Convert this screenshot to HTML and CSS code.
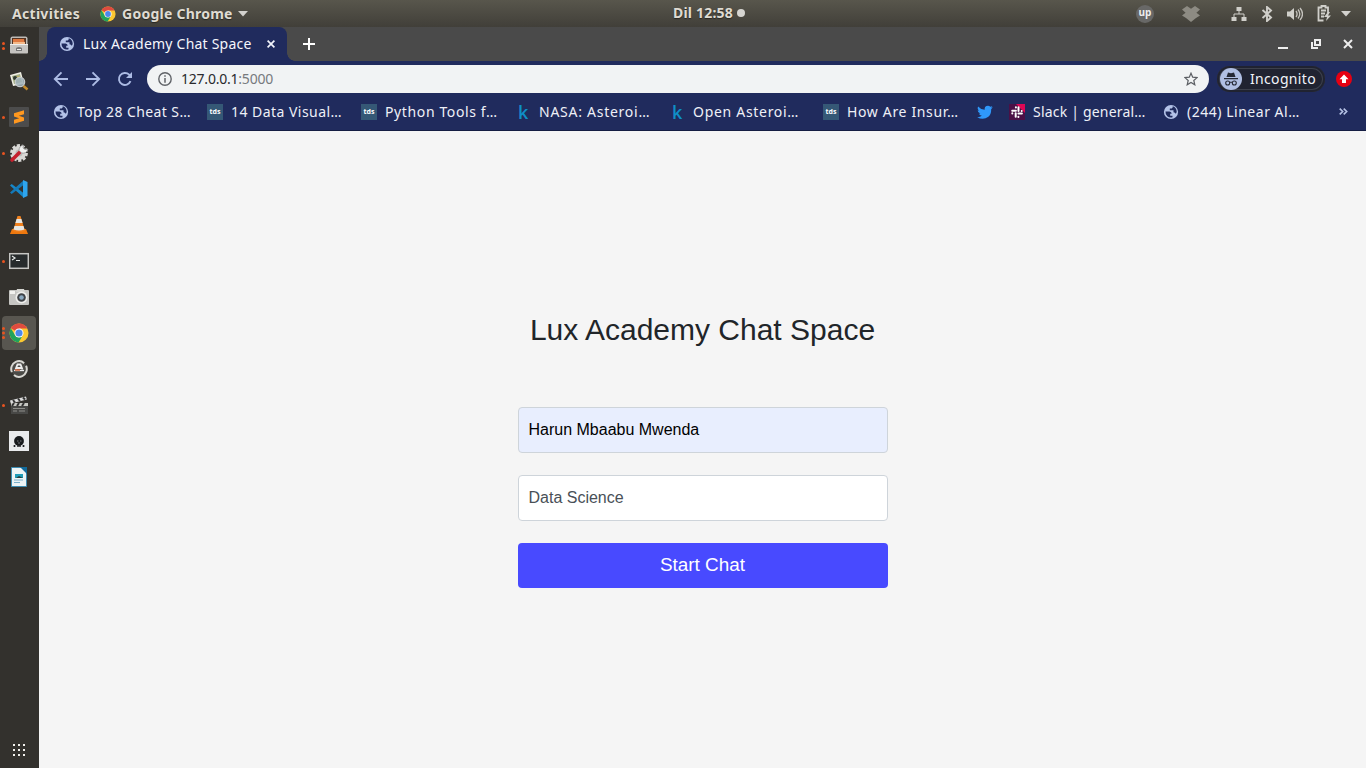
FILE: index.html
```html
<!DOCTYPE html>
<html lang="en">
<head>
<meta charset="utf-8">
<title>Lux Academy Chat Space</title>
<link rel="stylesheet" href="styles.css">
</head>
<body>
<svg class="defs" width="0" height="0">
  <symbol id="chrome" viewBox="0 0 20 20">
    <circle cx="10" cy="10" r="9.5" fill="#fbc831"/>
    <path d="M10 10 1.8 5.2A9.5 9.5 0 0 1 18.3 5.6H10z" fill="#de4b3f"/>
    <path d="M1.8 5.2A9.5 9.5 0 0 0 9.600 19.5L13.8 12.2 10 14.4 6 12z" fill="#21a35c"/>
    <circle cx="10" cy="10" r="4.5" fill="#fff"/><circle cx="10" cy="10" r="3.6" fill="#4d88ec"/>
  </symbol>
  <symbol id="globe" viewBox="0 0 16 16">
    <circle cx="8" cy="8" r="7.1" fill="#b4c3e8"/>
    <path d="M2.500 7.500H6.500Q8.700 7.700 8.700 9.800H7.200V11.800H9.500V13.300Q6.500 14 4.300 12.200 2.200 10.200 2.500 7.500zM9.800 2.300Q13.500 3.500 13.700 7.800 13.500 9.300 12.600 9.800 12.300 8.200 10.500 8.200V6.300H6.800V4.600H8.700Q9.800 4.300 9.800 2.300z" fill="#202b5d"/>
  </symbol>
</svg>
<header class="topbar">
  <span class="activities">Activities</span>
  <svg class="app-logo" width="16" height="16"><use href="#chrome"/></svg>
  <span class="app-name">Google Chrome</span>
  <svg class="caret" width="10" height="6"><path d="M0 0h10L5 5.5z" fill="#d3d2ce"/></svg>
  <div class="clock"><span class="clock-text">Dil 12:58</span><svg width="8" height="8"><circle cx="4" cy="4" r="4" fill="#d6d5d1"/></svg></div>
  <div class="tray">
    <div class="up">up</div>
    <svg class="dropbox" width="18" height="16" viewBox="0 0 18 16" fill="#8d8b83"><path d="M5 0 9 2.7 13 0 18 3.6 14.4 6.7 18 9.6 14 12 9 16 4 12 0 9.6 3.6 6.7 0 3.6z"/></svg>
    <svg class="network" width="16" height="16" viewBox="0 0 16 16" fill="#d0cfca"><path d="M5.5 1h5v4h-5zM.5 11h5v4h-5zM10.500 11h5v4h-5z"/><path d="M8 5v3M3 11V8h10v3" fill="none" stroke="#d0cfca"/></svg>
    <svg class="bluetooth" width="12" height="16" viewBox="0 0 12 16"><path d="M1.500 4 10 11.500 6 15V1l4 3.500L1.500 12" fill="none" stroke="#d0cfca" stroke-width="1.900"/></svg>
    <svg class="sound" width="17" height="16" viewBox="0 0 17 16"><path d="M1 5.500h3L8 2v12L4 10.500H1z" fill="#d0cfca"/><path d="M10 5q2.200 3 0 6M12 3.500q3.600 4.500 0 9M14 2q5 6 0 12" fill="none" stroke="#c5c3bd" stroke-width="1.300"/></svg>
    <svg class="battery" width="15" height="17" viewBox="0 0 15 17"><path d="M3.500 2.500h1V1h4v1.500h2.500V8M6.500 15.500h-5v-13H4M4 5.500h5M4 8.500h4M4 11.500h3" fill="none" stroke="#d0cfca" stroke-width="1.800"/><path d="M11 7 7 12h3l-1 4 5-5.500h-3L13 7z" fill="#d0cfca"/></svg>
    <svg width="10" height="6"><path d="M0 0h10L5 5.500z" fill="#d3d2ce"/></svg>
  </div>
</header>
<div class="desktop">
  <nav class="dock">
    <div class="launch run2"><svg viewBox="0 0 20 20"><rect x="1.500" y="1.500" width="17" height="10" rx="2" fill="#bdbbb7"/><path d="M3 3h14v7H3z" fill="#543423"/><path d="M4 4h11l1 6H4z" fill="#df7940"/><path d="M4 7h12v3H4z" fill="#f4b989"/><rect x="1" y="9" width="18" height="9.500" rx="1" fill="#c5c3c0"/><path d="M1 9.500h18" stroke="#eee"/><path d="M7 13q3-2 6 0v3H7z" fill="#777"/><path d="M8 14h4v1H8z" fill="#eee"/></svg></div>
    <div class="launch"><svg viewBox="0 0 20 20"><path d="M1 4 12 1l3 12-11 2z" fill="#f0eee4"/><path d="m3 5 8-2 2 8-8 2z" fill="#a3ae85"/><circle cx="6" cy="7" r="2" fill="#2f3931"/><path d="m8 5 3 1-1 2z" fill="#d9ad43"/><circle cx="11" cy="11" r="4.700" fill="#9fb0ba" fill-opacity=".85" stroke="#c4c9cb" stroke-width="1.200"/><path d="m14.500 15 4 3.500" stroke="#c38b2c" stroke-width="2.500"/></svg></div>
    <div class="launch run1"><svg viewBox="0 0 20 20"><rect width="20" height="20" rx="1" fill="#4c4c4c"/><path d="m5 6.200 10-3v4l-5.200 1.600L15 10.400v3.400l-10 3v-4l5.200-1.600L5 9.600z" fill="#ff981f"/></svg></div>
    <div class="launch run1"><svg viewBox="0 0 20 20"><circle cx="10" cy="10" r="7.200" fill="#d9d8d5" stroke="#d9d8d5" stroke-width="3.400" stroke-dasharray="3 1.520"/><circle cx="10" cy="10" r="3.500" fill="#bdbcb8"/><path d="m3 17 7.500-7.500" stroke="#c5202d" stroke-width="3.600" stroke-linecap="round"/><path d="M10 7.500Q10 3 14.500 2L14 5l2 1.500 3-.5Q17.500 11 12.500 10z" fill="#f1f1ef" stroke="#777" stroke-width=".6"/></svg></div>
    <div class="launch"><svg viewBox="0 0 20 20"><path d="m1 6.500 1.700-1.400L14.500 14v4.500z" fill="#1687c9"/><path d="m1 13.500 1.700 1.400L14.500 6V1.500z" fill="#1479b8"/><path d="m14 1 4.500 2v14L14 19z" fill="#2ea5ee"/></svg></div>
    <div class="launch"><svg viewBox="0 0 20 20"><path d="M3 14h14l2 5H1z" fill="#ee780e"/><path d="M8.500 1h3L16 16q-6 2-12 0z" fill="#f0811e"/><path d="M7.600 4h4.800l1.200 4H6.400zM5.500 11h9l1 3.500q-5.500 2-11 0z" fill="#e7e7e3"/></svg></div>
    <div class="launch run1"><svg viewBox="0 0 20 20"><rect x=".7" y="2.700" width="18.600" height="14.600" fill="#272b2c" stroke="#c6c6c3" stroke-width="1.500"/><path d="m3 5 3 2-3 2M7 9.500h4" fill="none" stroke="#e5e8e7" stroke-width="1.200"/></svg></div>
    <div class="launch"><svg viewBox="0 0 20 20"><rect y="3" width="20" height="15" rx="1" fill="#c5c5c2"/><path d="M8 2h7l1 3H7z" fill="#d5d5d1"/><path d="M1 4h5v3H1z" fill="#f2f2ef"/><circle cx="12.500" cy="10.500" r="6" fill="#eeeeeb"/><circle cx="12.500" cy="10.500" r="4.300" fill="#404347"/><circle cx="12.500" cy="10.500" r="2.300" fill="#8ba9c0"/></svg></div>
    <div class="launch active run3"><svg viewBox="0 0 20 20"><use href="#chrome"/></svg></div>
    <div class="launch"><svg viewBox="0 0 20 20"><circle cx="10" cy="10" r="7.800" fill="#4c4b47" stroke="#d8d7d2" stroke-width="2" stroke-dasharray="21 3.500" transform="rotate(-25 10 10)"/><path d="m6.500 10.500 2-5h3l2 5M7 9h6" fill="none" stroke="#eee" stroke-width="1.800"/><path d="M5 11.500h10" stroke="#eee" stroke-width="1.300"/><path d="M6 11h5" stroke="#d66438" stroke-width="1.500"/></svg></div>
    <div class="launch run1"><svg viewBox="0 0 20 20"><path d="m1 5.500 16-4 .8 3-16 4z" fill="#ddd"/><path d="m4 5 2 2.500M9 3.500l2 2.500M14 2.500l2 2" stroke="#333" stroke-width="2"/><rect x="2" y="8" width="17" height="11" fill="#484846"/><path d="M2 8h17v3H2z" fill="#c7c7c2"/><path d="m5 8-2 3M10 8l-2 3M15 8l-2 3" stroke="#333" stroke-width="2"/><path d="M4 13.500h12M4 16h4M10 16h6" stroke="#8e8e8a"/></svg></div>
    <div class="launch"><svg viewBox="0 0 20 20"><path d="M0 0h20v20H0z" fill="#e9eaec"/><circle cx="10" cy="10" r="4.900" fill="#17191c"/><path d="M5.500 14v2M14.500 14v2M8 15h4" stroke="#202225" stroke-width="1.700"/><path d="M8 10h1.500M11 10h1.500M9 12h2" stroke="#77797b"/></svg></div>
    <div class="launch"><svg viewBox="0 0 20 20"><path d="M2.500.5h10l5 5v14h-15z" fill="#edf3f5" stroke="#3d8bb0"/><path d="M11 0h7v7z" fill="#126a9b"/><path d="M6 7h8v4H6z" fill="#1f9cb8"/><path d="m7 11 3-2 4 2z" fill="#263d3b"/><path d="M5 13h9M5 15.500h6" stroke="#7ab0cb" stroke-width="1.200"/></svg></div>
    <div class="apps"><svg width="12" height="12"><path d="M1 0v12M6 0v12M11 0v12" stroke="#f1f0ec" stroke-width="2" stroke-dasharray="2 3"/></svg></div>
  </nav>
  <main class="browser">
    <div class="tabstrip">
      <div class="tab">
        <svg width="16" height="16"><use href="#globe"/></svg>
        <span class="tab-title">Lux Academy Chat Space</span>
        <svg class="tab-close" width="8" height="8"><path d="m.6.6 6.800 6.800m0-6.800L.6 7.400" stroke="#f2f4fb" stroke-width="1.700"/></svg>
      </div>
      <svg class="new-tab" width="12" height="12"><path d="M6 0v12M0 6h12" stroke="#fff" stroke-width="2"/></svg>
      <div class="window-buttons">
        <svg width="10" height="10"><path d="M0 9h10" stroke="#eee" stroke-width="2"/></svg>
        <svg width="10" height="10"><path d="M4 1h5v5H4zM1 3v6h6" fill="none" stroke="#eee" stroke-width="2"/></svg>
        <svg width="10" height="10"><path d="m1 1 8 8m0-8L1 9" stroke="#eee" stroke-width="2"/></svg>
      </div>
    </div>
    <div class="toolbar">
      <svg width="16" height="16"><path d="M15 8H2M8.500 1.300 1.800 8l6.700 6.700" fill="none" stroke="#acbbe4" stroke-width="1.900"/></svg>
      <svg width="16" height="16"><path d="M1 8h13M7.500 1.300 14.200 8l-6.700 6.700" fill="none" stroke="#acbbe4" stroke-width="1.900"/></svg>
      <svg width="16" height="16"><path d="M13.500 10.200A6 6 0 1 1 12.200 3.700L14 5.500" fill="none" stroke="#acbbe4" stroke-width="1.900"/><path d="M15 1v6H9z" fill="#acbbe4"/></svg>
      <div class="address">
        <svg width="14" height="14"><circle cx="7" cy="7" r="6.200" fill="none" stroke="#606368" stroke-width="1.400"/><path d="M7 6v4.700M7 3.300v1.500" stroke="#606368" stroke-width="1.500"/></svg>
        <span class="url">127.0.0.1<span class="port">:5000</span></span>
        <svg class="star" width="14" height="14" viewBox="0 0 14 14"><path d="m7 1.200 1.700 4 4.400.4-3.300 2.900 1 4.300L7 10.500l-3.800 2.300 1-4.300L.9 5.600l4.400-.4z" fill="none" stroke="#5b5e63" stroke-width="1.200"/></svg>
      </div>
      <div class="incognito">
        <svg width="22" height="22" viewBox="0 0 22 22"><circle cx="11" cy="11" r="11" fill="#b0bfe3"/><path d="M8 4.500 11 5.200l3-.7L15.500 9h-9zM4 10h14v1.200H4z" fill="#252936"/><path d="M9.700 14.500q1.300-.8 2.600 0" fill="none" stroke="#252936"/><circle cx="7.700" cy="15" r="2" fill="none" stroke="#252936" stroke-width="1.100"/><circle cx="14.300" cy="15" r="2" fill="none" stroke="#252936" stroke-width="1.100"/></svg>
        <span class="incog-text">Incognito</span>
      </div>
      <svg class="update" width="16" height="16"><circle cx="8" cy="8" r="8" fill="#e60012"/><path d="m8 3.500 4.500 4.700H10V12H6V8.200H3.500z" fill="#fff"/></svg>
    </div>
    <div class="bookmarks">
      <div class="bookmark"><svg width="16" height="16"><use href="#globe"/></svg><span class="b1">Top 28 Cheat S…</span></div>
      <div class="bookmark"><span class="tds">tds</span><span class="b2">14 Data Visual…</span></div>
      <div class="bookmark"><span class="tds">tds</span><span class="b3">Python Tools f…</span></div>
      <div class="bookmark"><span class="kaggle">k</span><span class="b4">NASA: Asteroi…</span></div>
      <div class="bookmark"><span class="kaggle">k</span><span class="b5">Open Asteroi…</span></div>
      <div class="bookmark"><span class="tds">tds</span><span class="b6">How Are Insur…</span></div>
      <div class="bookmark short"><svg width="16" height="16" viewBox="0 0 24 24"><path d="M23.600 4.900q-1.300.6-2.700.8 1.500-1 2.100-2.600-1.400.8-3 1.200A4.800 4.800 0 0 0 11.700 8.700Q5.500 8.400 1.700 3.700q-2 4 1.500 6.400-1.200 0-2.200-.6.100 3.800 3.900 4.800-1 .3-2.200.1 1 3.100 4.500 3.400Q4.200 20.200.1 19.800 9.300 25 17 19.300 21.500 15.300 21.300 7.400q1.300-1 2.300-2.500z" fill="#2f98fa"/></svg></div>
      <div class="bookmark"><svg width="16" height="16" viewBox="0 0 16 16"><path d="M0 0h16v16H0z" fill="#4b1046"/><path d="M7 0h9v9z" fill="#df0755"/><path d="M6.900 3.200v.2M3.200 6.700h3.700M9.500 3.300v3.600M12.700 6.900v.2M6.700 9.300v3.500M3.300 9.200v.2M9.400 9.400h3.500M9.400 12.700v.2" stroke="#fff" stroke-width="2" stroke-linecap="round"/></svg><span class="b7">Slack | general…</span></div>
      <div class="bookmark"><svg width="16" height="16"><use href="#globe"/></svg><span class="b8">(244) Linear Al…</span></div>
      <svg class="more" width="9" height="7"><path d="m.7.6 3 2.900-3 2.900m4-5.800 3 2.900-3 2.900" fill="none" stroke="#b5c2e5" stroke-width="1.600"/></svg>
    </div>
    <section class="page">
      <form class="login">
        <h1>Lux Academy Chat Space</h1>
        <input class="field filled" type="text" value="Harun Mbaabu Mwenda">
        <input class="field" type="text" placeholder="Data Science">
        <button class="start" type="button">Start Chat</button>
      </form>
    </section>
  </main>
</div>
</body>
</html>
```
FILE: styles.css
```css
* { box-sizing: border-box; }
body { margin: 0; width: 1366px; height: 768px; overflow: hidden; font-family: "Noto Sans", sans-serif; font-size: 14px; }
svg { display: block; flex: none; }
.defs { position: absolute; }
.topbar { position: relative; height: 27px; padding: 0 15px 0 12px; display: flex; align-items: center; background: linear-gradient(#58564c, #413f39); color: #dfdbd2; font-weight: 700; font-size: 14px; white-space: nowrap; text-shadow: 0 1px 1px #282721; }
.activities { width: 68px; letter-spacing: .3px; }
.app-logo { margin-left: 20px; }
.app-name { width: 110px; margin-left: 6px; letter-spacing: .25px; }
.caret { margin-left: 6px; }
.clock { position: absolute; left: 673px; top: 0; height: 26px; display: flex; align-items: center; gap: 3px; }
.clock-text { width: 61px; padding-bottom: 1px; letter-spacing: .2px; }
.tray { margin-left: auto; display: flex; align-items: center; }
.up { width: 18px; height: 18px; border-radius: 50%; background: #686867; color: #eee; text-align: center; font: 700 10px/15px "Open Sans", sans-serif; text-shadow: none; }
.dropbox { margin-left: 28px; }
.network { margin-left: 31px; }
.bluetooth { margin-left: 14px; }
.sound { margin-left: 13px; }
.battery { margin-left: 14px; }
.battery + svg { margin-left: 9px; }
.desktop { display: flex; height: 741px; }
.dock { width: 39px; padding-top: 1px; background: #33312d; display: flex; flex-direction: column; align-items: center; gap: 2px; }
.launch { position: relative; width: 34px; height: 34px; display: grid; place-items: center; border-radius: 4px; margin-right: 1px; }
.launch svg { width: 20px; height: 20px; }
.active { background: #585650; }
.run1::before, .run2::before, .run3::before { content: ""; position: absolute; left: 0; top: 16px; width: 3px; height: 3px; border-radius: 50%; background: #e95420; }
.run2::before { top: 14px; box-shadow: 0 5px #e95420; }
.run3::before { top: 11px; box-shadow: 0 4.500px #e95420, 0 9px #e95420; }
.apps { margin: auto 1px 12px 0; }
.browser { flex: 1; min-width: 0; display: flex; flex-direction: column; background: #202b5d; }
.tabstrip { height: 34px; padding: 0 13px 0 8px; display: flex; align-items: center; background: #4a4a4a; }
.tab { position: relative; width: 240px; height: 34px; padding: 0 12px; border-radius: 8px 8px 0 0; display: flex; align-items: center; background: #202b5d; color: #f5f6fb; }
.tab::before, .tab::after { content: ""; position: absolute; bottom: 0; width: 8px; height: 8px; }
.tab::before { left: -8px; background: radial-gradient(circle at 0 0, #4a4a4a 7.500px, #202b5d 8px); }
.tab::after { right: -8px; background: radial-gradient(circle at 100% 0, #4a4a4a 7.500px, #202b5d 8px); }
.tab-title { margin-left: 8px; padding-bottom: 2px; width: 169px; white-space: nowrap; letter-spacing: .22px; }
.tab-close { margin-left: auto; }
.new-tab { margin-left: 16px; }
.window-buttons { margin-left: auto; display: flex; gap: 23px; }
.window-buttons svg:nth-child(2) { margin-right: -1px; }
.toolbar { height: 36px; padding: 0 14px; display: flex; align-items: center; gap: 16px; }
.address { width: 1062px; height: 28px; margin-left: -2px; padding: 0 11px; border-radius: 14px; background: #f1f3f4; display: flex; align-items: center; }
.url { margin-left: 9px; padding-bottom: 2px; color: #292a2d; letter-spacing: -.22px; }
.port { color: #777a7e; }
.star { margin-left: auto; }
.incognito { width: 108px; height: 26px; margin-left: -8px; padding-left: 3px; border-radius: 14px; background: #202331; color: #f1f3f9; display: flex; align-items: center; gap: 8px; box-shadow: inset 0 0 0 2px #202331, inset 0 0 0 3px #3c404c; }
.incog-text { padding-bottom: 2px; letter-spacing: .33px; }
.update { margin-left: -5px; }
.bookmarks { height: 34px; padding: 0 18px 4px 14px; display: flex; align-items: center; border-bottom: 1px solid #151d43; color: #eef0f7; }
.bookmark { width: 154px; display: flex; align-items: center; gap: 8px; white-space: nowrap; }
.short { width: 32px; }
.b1 { letter-spacing: .4px; }
.b2 { letter-spacing: .46px; }
.b3 { letter-spacing: .62px; }
.b4 { letter-spacing: .74px; }
.b5 { letter-spacing: .7px; }
.b6 { letter-spacing: .65px; }
.b7 { letter-spacing: .2px; }
.b8 { letter-spacing: .52px; }
.tds { width: 16px; height: 16px; background: #355876; color: #fff; text-align: center; font: 700 7px/16px "Open Sans", sans-serif; }
.kaggle { width: 16px; padding-left: 3px; color: #0f8fc7; font: 600 18px/20px "Open Sans", sans-serif; }
.more { margin-left: auto; }
.page { flex: 1; background: #f5f5f5; display: flex; justify-content: center; font-family: "Liberation Sans", sans-serif; }
.login { width: 370px; padding-top: 180px; display: flex; flex-direction: column; }
h1 { margin: 0 0 59px; font-size: 30px; line-height: 37px; font-weight: 400; text-align: center; color: #212529; white-space: nowrap; }
.field { width: 100%; height: 46px; margin: 0 0 22px; padding: 0 10px; border: 1px solid #ced4da; border-radius: 4px; background: #fff; font: 16px "Liberation Sans", sans-serif; color: #495057; }
.field::placeholder { color: #495057; opacity: 1; }
.filled { background: #e8eefe; color: #000; }
.start { height: 45px; padding: 0 0 2px; border: 0; border-radius: 4px; background: #484aff; color: #fff; font: 18.900px "Liberation Sans", sans-serif; }
```
